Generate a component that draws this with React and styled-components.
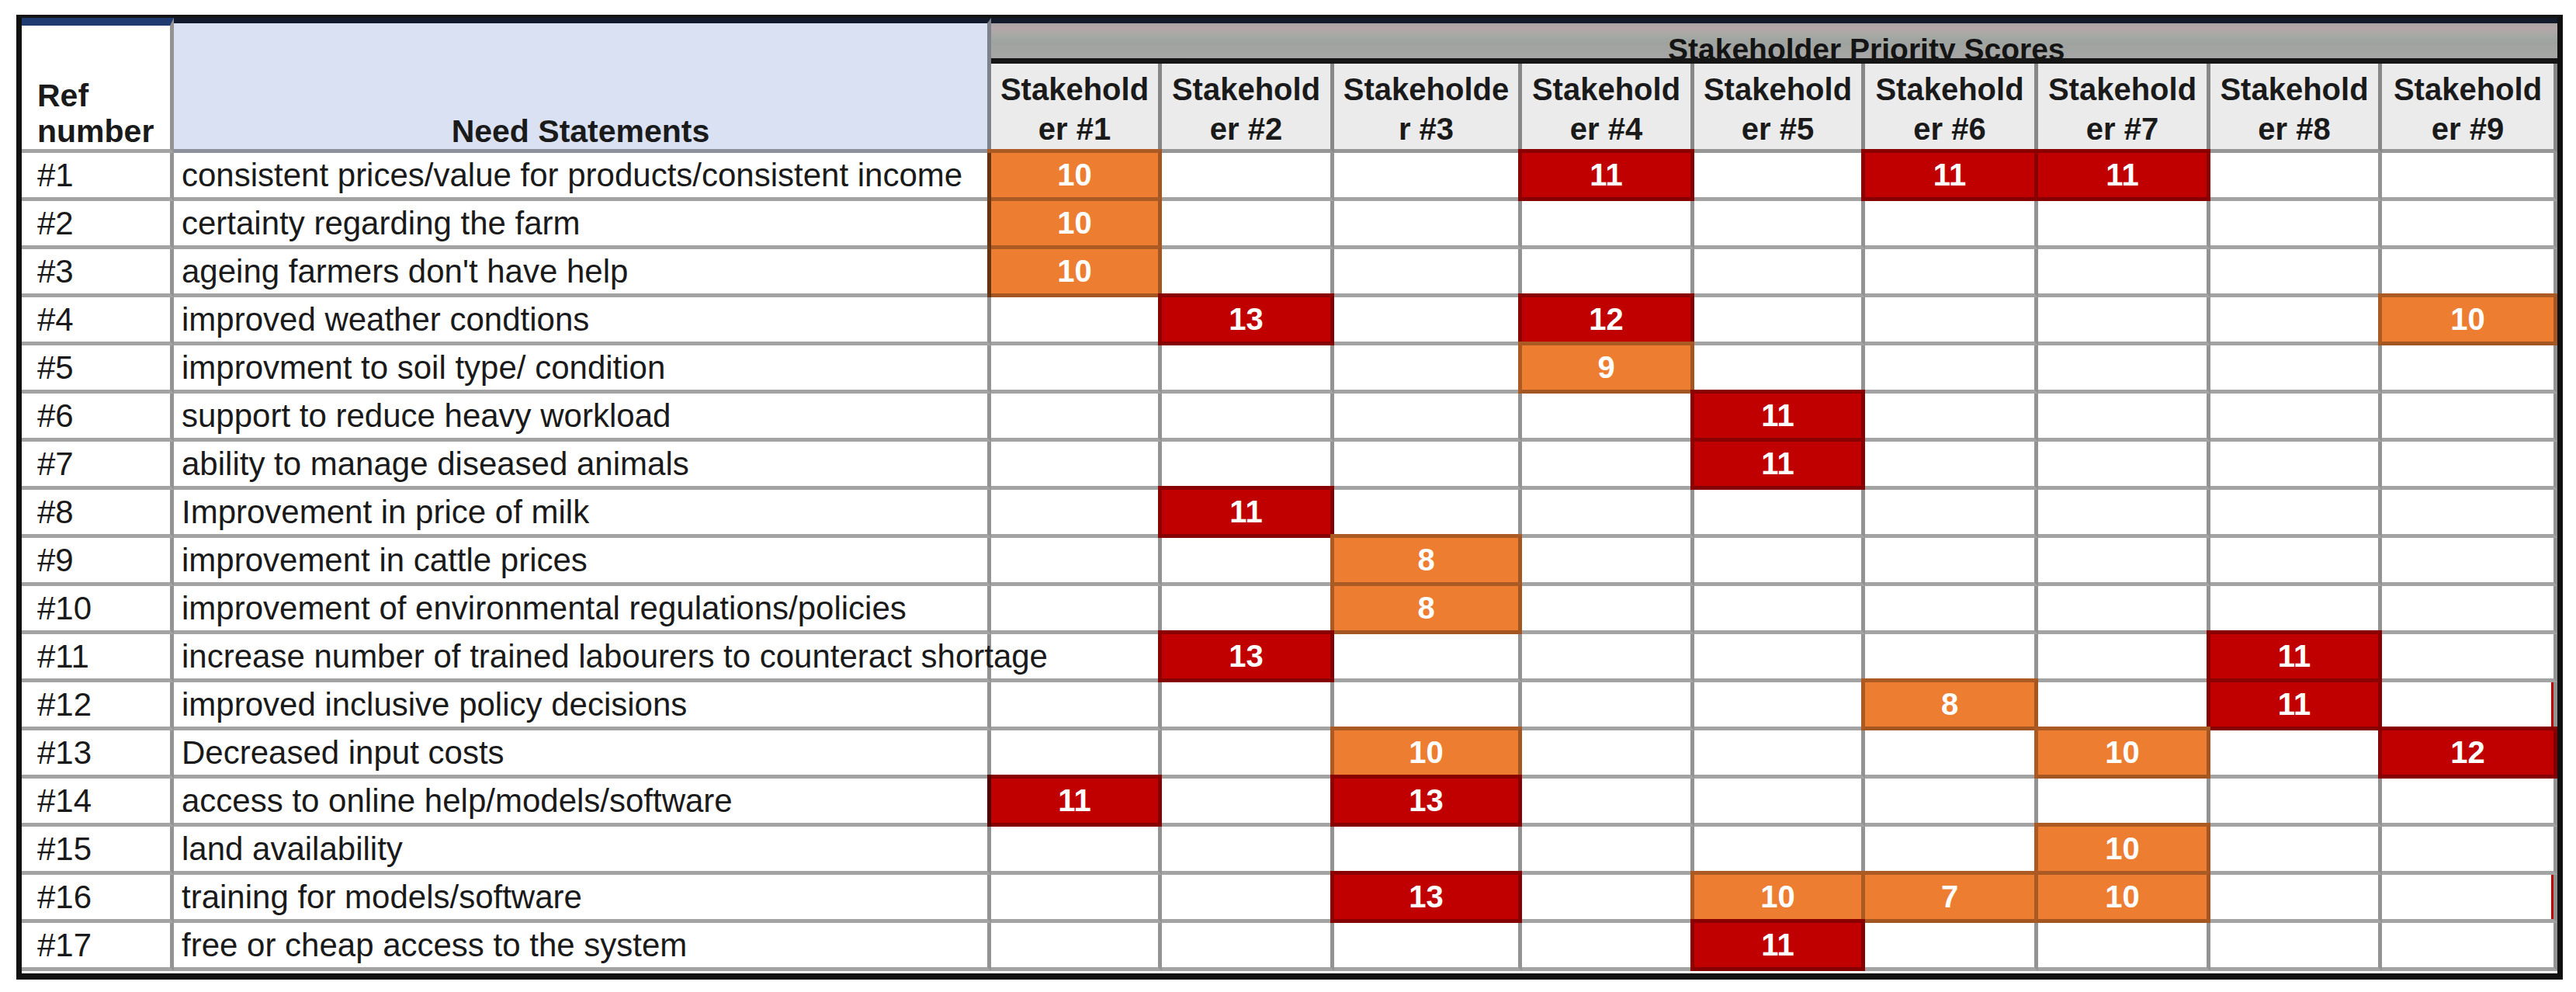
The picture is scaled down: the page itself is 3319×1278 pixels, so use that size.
import React from "react";
import styled, { createGlobalStyle, css } from "styled-components";

const GlobalStyle = createGlobalStyle`
	body {
		margin: 0;
		background: #ffffff;
		font-family: "Liberation Sans", Arial, sans-serif;
		color: #1a1a1a;
	}
`;

const COLS = [196, 1053, 220, 222, 242, 222, 220, 223, 222, 221, 226];
const ORANGE = "#ed7d31";
const RED = "#c00000";
const LINE_V = "rgba(0, 0, 0, 0.42)";
const LINE_H = "rgba(0, 0, 0, 0.36)";

const Page = styled.div`
	padding: 19px 0 0 21px;
`;

const Sheet = styled.div`
	display: grid;
	width: max-content;
	grid-template-columns: ${COLS.map((c) => c + "px").join(" ")};
	grid-template-rows: 59px 115px repeat(17, 62px);
	background: #ffffff;
	border-top: 4px solid #151515;
	border-left: 7px solid #111111;
	border-right: 7px solid #111111;
	border-bottom: 8px solid #111111;
	padding-bottom: 3px;
`;

const Cell = styled.div`
	box-sizing: border-box;
	border-right: 5px solid ${LINE_V};
	border-bottom: 5px solid ${LINE_H};
	display: flex;
	align-items: center;
	white-space: nowrap;
	font-size: 42px;
`;

const RefHead = styled(Cell)`
	grid-row: 1 / 3;
	grid-column: 1;
	border-top: 10px solid #1f3a70;
	flex-direction: column;
	align-items: flex-start;
	justify-content: flex-end;
	padding-left: 20px;
	font-weight: bold;
	font-size: 41px;
	line-height: 46px;
`;

const NeedHead = styled(Cell)`
	grid-row: 1 / 3;
	grid-column: 2;
	border-top: 7px solid #121b2e;
	background: #d9e1f2;
	justify-content: center;
	align-items: flex-end;
	font-weight: bold;
	font-size: 41px;
	line-height: 46px;
`;

const Band = styled.div`
	grid-row: 1;
	grid-column: 3 / 12;
	box-sizing: border-box;
	border-top: 7px solid #121a2c;
	border-bottom: 7px solid #161616;
	background: linear-gradient(
		#a9a4a6 0%,
		#b5a8aa 14%,
		#a4a8a3 38%,
		#9fa39f 55%,
		#a6a6a6 100%
	);
	overflow: hidden;
	padding: 14px 0 0 872px;
	font-weight: bold;
	font-size: 39px;
	line-height: 39px;
	white-space: nowrap;
	color: #141414;
`;

const SubHead = styled(Cell)`
	grid-row: 2;
	background: #ebebeb;
	flex-direction: column;
	justify-content: flex-end;
	font-weight: bold;
	font-size: 40px;
	line-height: 51px;
	color: #1a1a1a;
`;

const RefCell = styled(Cell)`
	padding-left: 20px;
`;

const NeedCell = styled(Cell)`
	padding-left: 10px;
	position: relative;
	z-index: 1;
	overflow: visible;
`;

const Score = styled(Cell)`
	justify-content: center;
	font-weight: bold;
	font-size: 40px;
	color: #ffffff;
	${(p) =>
		p.$fill &&
		css`
			background: ${p.$fill === "r" ? RED : ORANGE};
			margin-top: -5px;
			margin-left: -5px;
			border-top: 5px solid rgba(0, 0, 0, 0.28);
			border-left: 5px solid rgba(0, 0, 0, 0.28);
			border-right-color: rgba(0, 0, 0, 0.3);
			border-bottom-color: rgba(0, 0, 0, 0.3);
		`}
	${(p) =>
		p.$edge &&
		css`
			box-shadow: inset -3px 0 0 ${RED};
		`}
`;

const heads = [
	["Stakehold", "er #1"],
	["Stakehold", "er #2"],
	["Stakeholde", "r #3"],
	["Stakehold", "er #4"],
	["Stakehold", "er #5"],
	["Stakehold", "er #6"],
	["Stakehold", "er #7"],
	["Stakehold", "er #8"],
	["Stakehold", "er #9"],
];

// scores: stakeholder index -> [value, colour]
const rows = [
	{ ref: "#1", need: "consistent prices/value for products/consistent income", s: { 1: [10, "o"], 4: [11, "r"], 6: [11, "r"], 7: [11, "r"] } },
	{ ref: "#2", need: "certainty regarding the farm", s: { 1: [10, "o"] } },
	{ ref: "#3", need: "ageing farmers don't have help", s: { 1: [10, "o"] } },
	{ ref: "#4", need: "improved weather condtions", s: { 2: [13, "r"], 4: [12, "r"], 9: [10, "o"] } },
	{ ref: "#5", need: "improvment to soil type/ condition", s: { 4: [9, "o"] } },
	{ ref: "#6", need: "support to reduce heavy workload", s: { 5: [11, "r"] } },
	{ ref: "#7", need: "ability to manage diseased animals", s: { 5: [11, "r"] } },
	{ ref: "#8", need: "Improvement in price of milk", s: { 2: [11, "r"] } },
	{ ref: "#9", need: "improvement in cattle prices", s: { 3: [8, "o"] } },
	{ ref: "#10", need: "improvement of environmental regulations/policies", s: { 3: [8, "o"] } },
	{ ref: "#11", need: "increase number of trained labourers to counteract shortage", s: { 2: [13, "r"], 8: [11, "r"] } },
	{ ref: "#12", need: "improved inclusive policy decisions", s: { 6: [8, "o"], 8: [11, "r"] }, edge: true },
	{ ref: "#13", need: "Decreased input costs", s: { 3: [10, "o"], 7: [10, "o"], 9: [12, "r"] } },
	{ ref: "#14", need: "access to online help/models/software", s: { 1: [11, "r"], 3: [13, "r"] } },
	{ ref: "#15", need: "land availability", s: { 7: [10, "o"] } },
	{ ref: "#16", need: "training for models/software", s: { 3: [13, "r"], 5: [10, "o"], 6: [7, "o"], 7: [10, "o"] }, edge: true },
	{ ref: "#17", need: "free or cheap access to the system", s: { 5: [11, "r"] } },
];

const App = () => {
	return (
		<Page>
			<GlobalStyle />
			<Sheet>
				<RefHead>
					<span>Ref</span>
					<span>number</span>
				</RefHead>
				<NeedHead>Need Statements</NeedHead>
				<Band>Stakeholder Priority Scores</Band>
				{heads.map((h, i) => (
					<SubHead key={i}>
						<span>{h[0]}</span>
						<span>{h[1]}</span>
					</SubHead>
				))}
				{rows.map((r) => (
					<React.Fragment key={r.ref}>
						<RefCell>{r.ref}</RefCell>
						<NeedCell>{r.need}</NeedCell>
						{heads.map((h, i) => {
							const sc = r.s[i + 1];
							return (
								<Score
									key={i}
									$fill={sc ? sc[1] : null}
									$edge={r.edge && i === 8}
								>
									{sc ? sc[0] : ""}
								</Score>
							);
						})}
					</React.Fragment>
				))}
			</Sheet>
		</Page>
	);
};

export default App;
